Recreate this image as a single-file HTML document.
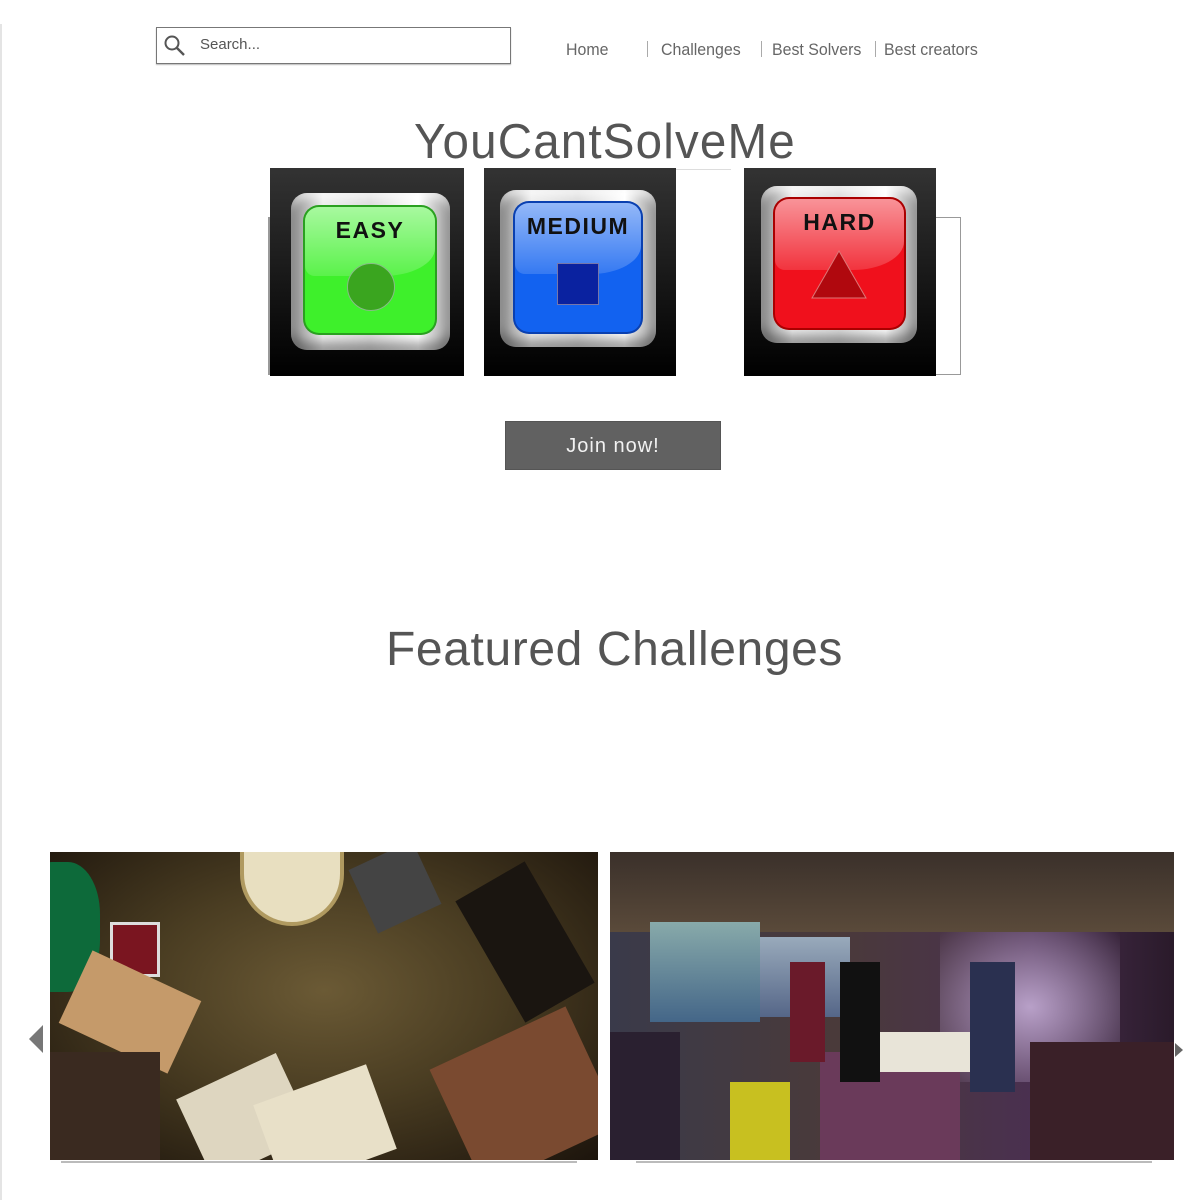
<!DOCTYPE html>
<html><head><meta charset="utf-8"><style>
*{margin:0;padding:0;box-sizing:border-box}
body{width:1198px;height:1200px;background:#fff;position:relative;overflow:hidden;font-family:"Liberation Sans",sans-serif;color:#555}
.abs{position:absolute}
.nav{font-size:16.5px;color:#666;top:41px;white-space:nowrap;transform:scaleX(.965);transform-origin:left}
.sep{width:1px;height:16px;background:#aaa;top:41px}
.tile{position:absolute;top:168px;height:208px;background:linear-gradient(#333,#000)}
.frame{position:absolute;border-radius:16px;background:linear-gradient(90deg,#888,#eee 20%,#ddd 50%,#fff 80%,#999);box-shadow:inset 0 -8px 10px rgba(0,0,0,.35),inset 0 6px 8px rgba(255,255,255,.6)}
.inner{position:absolute;border-radius:14px;text-align:center;font-weight:bold;font-size:23px;color:#111;letter-spacing:1.5px;padding-top:10px}
.gloss{position:absolute;left:0;top:0;right:0;height:55%;border-radius:14px 14px 40% 10px;background:linear-gradient(rgba(255,255,255,.55),rgba(255,255,255,.15))}
.inner span{position:relative}
</style></head><body>
<div class="abs" style="left:0;top:24px;width:2px;height:1176px;background:#e4e4e4"></div>

<div class="abs" style="left:156px;top:27px;width:355px;height:37px;border:1px solid #777;box-shadow:0 1px 1px #bbb"></div>
<svg class="abs" style="left:163px;top:34px" width="24" height="24" viewBox="0 0 24 24"><circle cx="9" cy="9" r="6.5" fill="none" stroke="#555" stroke-width="2"/><line x1="14" y1="14" x2="21" y2="21" stroke="#555" stroke-width="2.4"/></svg>
<div class="abs" style="left:200px;top:36px;font-size:15px;color:#555">Search...</div>

<div class="abs nav" style="left:566px">Home</div>
<div class="abs sep" style="left:647px"></div>
<div class="abs nav" style="left:661px">Challenges</div>
<div class="abs sep" style="left:761px"></div>
<div class="abs nav" style="left:772px">Best Solvers</div>
<div class="abs sep" style="left:875px"></div>
<div class="abs nav" style="left:884px">Best creators</div>

<div class="abs" style="left:414px;top:114px;font-size:49px;color:#555;letter-spacing:1.2px;white-space:nowrap;transform:scaleX(.97);transform-origin:left">YouCantSolveMe</div>
<div class="abs" style="left:676px;top:169px;width:55px;height:1px;background:#ddd"></div>
<div class="abs" style="left:268px;top:217px;width:2px;height:158px;background:#999"></div>
<div class="abs" style="left:936px;top:217px;width:25px;height:158px;border:1px solid #999;border-left:none"></div>

<div class="tile" style="left:270px;width:194px"></div>
<div class="frame" style="left:291px;top:193px;width:159px;height:157px"></div>
<div class="inner" style="left:305px;top:207px;width:130px;height:126px;background:#3ef02b;box-shadow:0 0 0 2px #2aa020"><div class="gloss"></div><span>EASY</span>
<div style="position:absolute;left:42px;top:56px;width:48px;height:48px;border-radius:50%;background:#3aa51f;border:1px solid #8b8"></div></div>

<div class="tile" style="left:484px;width:192px"></div>
<div class="frame" style="left:500px;top:190px;width:156px;height:157px"></div>
<div class="inner" style="left:515px;top:203px;width:126px;height:129px;background:#1262f0;box-shadow:0 0 0 2px #0a40b0"><div class="gloss"></div><span>MEDIUM</span>
<div style="position:absolute;left:42px;top:60px;width:42px;height:42px;background:#0a22a0;border:1px solid #77a"></div></div>

<div class="tile" style="left:744px;width:192px"></div>
<div class="frame" style="left:761px;top:186px;width:156px;height:157px"></div>
<div class="inner" style="left:775px;top:199px;width:129px;height:129px;background:#f0101c;box-shadow:0 0 0 2px #a00"><div class="gloss"></div><span>HARD</span>
<svg style="position:absolute;left:34px;top:50px" width="60" height="52"><polygon points="30,2 57,49 3,49" fill="#b0080e" stroke="#d77" stroke-width="1"/></svg></div>

<div class="abs" style="left:505px;top:421px;width:216px;height:49px;background:#616161;border:1px solid #555;color:#f2f2f2;font-size:20px;letter-spacing:1px;text-align:center;line-height:49px">Join now!</div>

<div class="abs" style="left:386px;top:622px;font-size:48px;color:#555;letter-spacing:0.6px;white-space:nowrap">Featured Challenges</div>

<!-- left image -->
<div class="abs" style="left:50px;top:852px;width:548px;height:308px;overflow:hidden;background:radial-gradient(ellipse at 50% 45%,#6b5a35 0%,#4a3d22 45%,#1c140c 100%)">
 <div class="abs" style="left:-30px;top:10px;width:80px;height:130px;border-radius:40%;background:#0d6a3a"></div>
 <div class="abs" style="left:190px;top:0;width:104px;height:74px;border-radius:0 0 52px 52px;background:#e8dfc0;border:4px solid #b09a60;border-top:none"></div>
 <div class="abs" style="left:310px;top:0;width:70px;height:70px;background:#444;transform:rotate(-25deg)"></div>
 <div class="abs" style="left:435px;top:20px;width:80px;height:140px;background:#1a1510;transform:rotate(-30deg)"></div>
 <div class="abs" style="left:60px;top:70px;width:50px;height:55px;background:#7a1520;border:3px solid #ddd"></div>
 <div class="abs" style="left:20px;top:120px;width:120px;height:80px;background:#c59a6a;transform:rotate(25deg)"></div>
 <div class="abs" style="left:0;top:200px;width:110px;height:108px;background:#3a2a20"></div>
 <div class="abs" style="left:140px;top:220px;width:110px;height:90px;background:#ded6c0;transform:rotate(-25deg)"></div>
 <div class="abs" style="left:215px;top:230px;width:120px;height:90px;background:#e8e0c8;transform:rotate(-20deg)"></div>
 <div class="abs" style="left:400px;top:180px;width:150px;height:130px;background:#7a4a30;transform:rotate(-25deg)"></div>
</div>
<!-- right image -->
<div class="abs" style="left:610px;top:852px;width:564px;height:308px;overflow:hidden;background:linear-gradient(90deg,#3a3a4a,#4a3a3a 40%,#4a3050 75%,#2a1a2a)">
 <div class="abs" style="left:0;top:0;width:564px;height:80px;background:linear-gradient(#3a302a,#5a4a3a)"></div>
 <div class="abs" style="left:40px;top:70px;width:110px;height:100px;background:linear-gradient(#8aa,#468)"></div>
 <div class="abs" style="left:150px;top:85px;width:90px;height:80px;background:linear-gradient(#9ab,#568)"></div>
 <div class="abs" style="left:330px;top:80px;width:180px;height:150px;background:radial-gradient(#b8a0c8,rgba(120,60,130,0))"></div>
 <div class="abs" style="left:210px;top:200px;width:140px;height:108px;background:#6a3a5a"></div>
 <div class="abs" style="left:230px;top:180px;width:130px;height:40px;background:#e8e4d8"></div>
 <div class="abs" style="left:230px;top:110px;width:40px;height:120px;background:#111"></div>
 <div class="abs" style="left:360px;top:110px;width:45px;height:130px;background:#2a3050"></div>
 <div class="abs" style="left:180px;top:110px;width:35px;height:100px;background:#6a1a2a"></div>
 <div class="abs" style="left:120px;top:230px;width:60px;height:78px;background:#c8c020"></div>
 <div class="abs" style="left:0;top:180px;width:70px;height:128px;background:#2a2030"></div>
 <div class="abs" style="left:420px;top:190px;width:144px;height:118px;background:#3a2028"></div>
</div>
<div class="abs" style="left:61px;top:1161px;width:516px;height:2px;background:#bbb"></div>
<div class="abs" style="left:636px;top:1161px;width:516px;height:2px;background:#bbb"></div>
<svg class="abs" style="left:28px;top:1024px" width="16" height="30"><polygon points="15,1 15,29 1,15" fill="#777"/></svg>
<svg class="abs" style="left:1174px;top:1042px" width="10" height="16"><polygon points="1,1 9,8 1,15" fill="#666"/></svg>
</body></html>
